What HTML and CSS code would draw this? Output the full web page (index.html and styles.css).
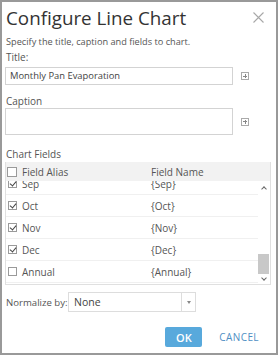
FILE: index.html
```html
<!DOCTYPE html>
<html>
<head>
<meta charset="utf-8">
<link rel="stylesheet" href="styles.css">
</head>
<body>
<div class="dialog">
  <div class="head">
    <h1 class="title">Configure Line Chart</h1>
    <svg class="close" width="11" height="11" viewBox="0 0 11 11"><path d="M0.5 0.5 L10.5 10.5 M10.5 0.5 L0.5 10.5" stroke="#a8a8a8" stroke-width="1.1" fill="none"/></svg>
  </div>
  <p class="intro">Specify the title, caption and fields to chart.</p>
  <div class="label">Title:</div>
  <div class="field-row first">
    <div class="input">Monthly Pan Evaporation</div>
    <span class="plus"></span>
  </div>
  <div class="label label-caption">Caption</div>
  <div class="field-row">
    <div class="input textarea"></div>
    <span class="plus"></span>
  </div>
  <div class="label label-fields">Chart Fields</div>
  <div class="table">
    <div class="thead">
      <span class="cb"></span>
      <span class="c-alias">Field Alias</span>
      <span class="c-name">Field Name</span>
    </div>
    <div class="tbody">
      <div class="rows">
        <div class="row partial"><span class="cb on"></span><span class="c-alias">Sep</span><span class="c-name">{Sep}</span></div>
        <div class="row"><span class="cb on"></span><span class="c-alias">Oct</span><span class="c-name">{Oct}</span></div>
        <div class="row"><span class="cb on"></span><span class="c-alias">Nov</span><span class="c-name">{Nov}</span></div>
        <div class="row"><span class="cb on"></span><span class="c-alias">Dec</span><span class="c-name">{Dec}</span></div>
        <div class="row"><span class="cb"></span><span class="c-alias">Annual</span><span class="c-name">{Annual}</span></div>
      </div>
      <div class="scrollbar">
        <span class="arrow up"></span>
        <span class="track"><span class="thumb"></span></span>
        <span class="arrow down"></span>
      </div>
    </div>
  </div>
  <div class="normalize">
    <span class="nlabel">Normalize by:</span>
    <div class="select"><span class="sval">None</span><span class="sbtn"><span class="tri"></span></span></div>
  </div>
  <div class="actions">
    <button class="ok">OK</button>
    <button class="cancel">CANCEL</button>
  </div>
</div>
</body>
</html>
```
FILE: styles.css
```css
* { box-sizing: border-box; }
html, body { margin: 0; padding: 0; background: #fff; }
.dialog {
  width: 278px; height: 355px;
  border: 2px solid #999;
  padding: 0 6px 0 3px;
  font-family: "Open Sans", sans-serif;
  color: #555;
  font-size: 10px;
  display: flex; flex-direction: column;
}
.head { display: flex; justify-content: space-between; align-items: flex-start; height: 33px; padding-top: 3px; flex: none; }
.title { margin: 0 0 0 1px; font-weight: normal; font-size: 18.8px; line-height: 26px; color: #333; }
.close { margin: 7px 6px 0 0; }
.intro { margin: 0 0 0 1px; line-height: 14px; height: 14px; font-size: 9.2px; flex: none; }
.label { line-height: 14px; height: 14px; margin: 1px 0 0 1px; flex: none; white-space: nowrap; }
.field-row { display: flex; align-items: center; flex: none; }
.field-row.first { margin-top: 3px; }
.input {
  width: 228px; height: 18px;
  border: 1px solid #d3d3d3;
  line-height: 16px; padding-left: 4px; color: #444; font-size: 9.4px;
}
.textarea { height: 27px; }
.plus {
  width: 8px; height: 8px; border: 1px solid #aaa; margin-left: 8px; position: relative;
}
.plus::before { content: ""; position: absolute; left: 1px; top: 2.5px; width: 4px; height: 1px; background: #888; }
.plus::after { content: ""; position: absolute; left: 2.5px; top: 1px; width: 1px; height: 4px; background: #888; }
.label-caption { margin-top: 9px; }
.label-fields { margin-top: 12px; }
.table { width: 266px; margin: 1px 0 0 0; border: 1px solid #e0e0e0; border-top: none; flex: none; }
.thead { display: flex; align-items: center; height: 19px; background: #f2f2f2; }
.cb {
  width: 9px; height: 9px; border: 1px solid #9a9a9a; background: #fff; margin-left: 2px; flex: none; position: relative;
}
.thead .cb { width: 10px; height: 10px; margin-left: 1px; }
.cb.on::after {
  content: ""; position: absolute; left: 2px; top: 0px; width: 3px; height: 5px;
  border-right: 1.5px solid #444; border-bottom: 1.5px solid #444; transform: rotate(40deg);
}
.c-alias { margin-left: 5px; width: 129px; }
.tbody { display: flex; height: 103px; overflow: hidden; }
.rows { flex: 1; }
.row { display: flex; align-items: center; height: 22px; border-bottom: 1px solid #f0f0f0; flex: none; }
.row.partial { height: 14px; padding-bottom: 8px; overflow: hidden; }
.scrollbar { width: 11px; margin-right: 1px; display: flex; flex-direction: column; align-items: center; }
.arrow { width: 4px; height: 4px; border-left: 1px solid #666; border-top: 1px solid #666; flex: none; }
.arrow.up { transform: rotate(45deg); margin-top: 6px; }
.arrow.down { transform: rotate(225deg); margin-bottom: 4px; }
.track { flex: 1; width: 11px; display: flex; flex-direction: column; justify-content: flex-end; }
.thumb { height: 20px; background: #c8c8c8; margin-bottom: 2px; }
.normalize { display: flex; align-items: center; margin-top: 7px; flex: none; }
.nlabel { margin-left: 1px; width: 62px; white-space: nowrap; font-size: 9.6px; }
.select { width: 128px; height: 20px; border: 1px solid #ddd; display: flex; align-items: center; }
.sval { flex: 1; padding-left: 5px; color: #444; font-size: 10.5px; }
.sbtn { width: 14px; height: 100%; border-left: 1px solid #ddd; display: flex; align-items: center; justify-content: center; }
.tri { width: 0; height: 0; border-left: 2.5px solid transparent; border-right: 2.5px solid transparent; border-top: 3px solid #888; }
.actions { display: flex; justify-content: flex-end; align-items: center; margin-top: 15px; padding-right: 11px; flex: none; }
button { font-family: "Open Sans", sans-serif; border: none; cursor: pointer; }
.ok { width: 37px; height: 20px; background: #58a9dc; color: #fff; font-size: 11px; font-weight: 600; border-radius: 2px; padding: 0; }
.cancel { background: none; color: #4f8fc4; font-size: 10px; margin-left: 17px; padding: 0; letter-spacing: 0.4px; }
```
